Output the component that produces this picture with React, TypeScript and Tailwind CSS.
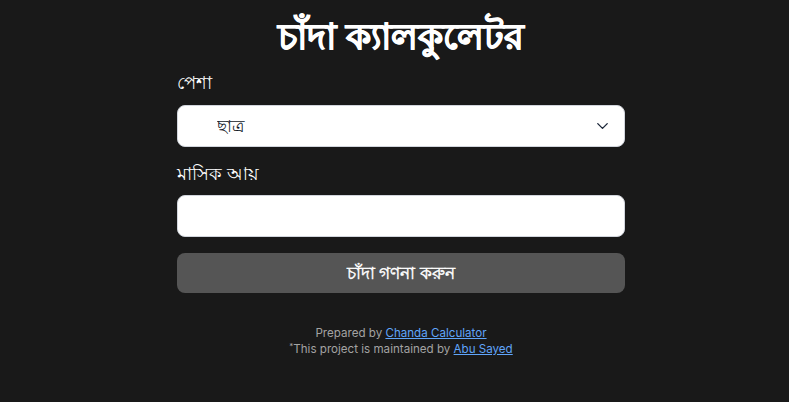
import { ChevronDown } from 'lucide-react';

export default function App() {
  return (
    <div className="min-h-screen bg-[#191919] font-['Noto_Sans','Liberation_Sans',sans-serif]">
      <div className="flex justify-center pl-[13px] pt-[12px]">
        <div className="w-[448px] flex flex-col">
          {/* Title */}
          <h1 className="text-center text-[36px] leading-[48px] font-black text-white [-webkit-text-stroke:0.8px_white]">
            চাঁদা ক্যালকুলেটর
          </h1>

          {/* Occupation */}
          <label className="mt-[9px] text-[18px] leading-[26px] text-white">পেশা</label>
          <div className="relative mt-[10px]">
            <select className="w-full h-[42px] appearance-none rounded-lg border border-gray-300 bg-white pl-[39px] pr-10 text-[17px] text-[#111827]">
              <option>ছাত্র</option>
            </select>
            <ChevronDown
              className="pointer-events-none absolute right-[13px] top-1/2 -translate-y-1/2 text-[#1e293b]"
              size={19}
              strokeWidth={1.7}
            />
          </div>

          {/* Monthly income */}
          <label className="mt-[13px] text-[18px] leading-[26px] text-white">মাসিক আয়</label>
          <input
            type="text"
            className="mt-[9px] w-full h-[42px] rounded-lg border border-gray-300 bg-white px-3 text-[17px]"
          />

          <button className="mt-[16px] h-[40px] w-full rounded-lg bg-[#555555] text-[17px] text-white [-webkit-text-stroke:0.45px_white]">
            চাঁদা গণনা করুন
          </button>

          {/* Footer */}
          <div className="mt-[32px] text-center text-[11.6px] leading-[16px] text-[#a3a3a3] font-['Inter',sans-serif]">
            <p>
              Prepared by{' '}
              <a href="#" className="text-[#60a5fa] underline">
                Chanda Calculator
              </a>
            </p>
            <p>
              <sup className="text-[8px]">*</sup>This project is maintained by{' '}
              <a href="#" className="text-[#60a5fa] underline">
                Abu Sayed
              </a>
            </p>
          </div>
        </div>
      </div>
    </div>
  );
}
